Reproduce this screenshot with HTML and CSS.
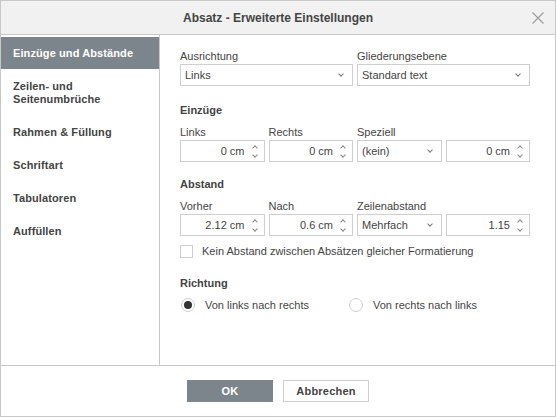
FILE: index.html
```html
<!DOCTYPE html>
<html lang="de">

<head>
    <meta charset="UTF-8">
    <meta name="viewport" content="width=device-width, initial-scale=1.0">
    <title>Absatz - Erweiterte Einstellungen</title>
    <link rel="stylesheet" href="styles.css">
</head>

<body>
    <div class="dialog">
        <header class="dialog_head">
            <h1>Absatz - Erweiterte Einstellungen</h1>
            <span class="close">
                <svg width="12" height="12" viewBox="0 0 12 12"><path d="M0.5 0.5 L11.5 11.5 M11.5 0.5 L0.5 11.5" stroke="#9a9a9a" stroke-width="1.1" fill="none"/></svg>
            </span>
        </header>

        <div class="dialog_body">
            <nav class="side">
                <div class="side_item active">Einzüge und Abstände</div>
                <div class="side_item">Zeilen- und<br>Seitenumbrüche</div>
                <div class="side_item">Rahmen &amp; Füllung</div>
                <div class="side_item">Schriftart</div>
                <div class="side_item">Tabulatoren</div>
                <div class="side_item">Auffüllen</div>
            </nav>

            <section class="panel">
                <!-- alignment / outline -->
                <div class="grid">
                    <div class="col2">
                        <label>Ausrichtung</label>
                        <div class="box select"><span>Links</span><i class="caret"></i></div>
                    </div>
                    <div class="col2">
                        <label>Gliederungsebene</label>
                        <div class="box select"><span>Standard text</span><i class="caret"></i></div>
                    </div>
                </div>

                <!-- indents -->
                <h2>Einzüge</h2>
                <div class="grid">
                    <div>
                        <label>Links</label>
                        <div class="box spin"><span>0 cm</span><i class="arrows"></i></div>
                    </div>
                    <div>
                        <label>Rechts</label>
                        <div class="box spin"><span>0 cm</span><i class="arrows"></i></div>
                    </div>
                    <div>
                        <label>Speziell</label>
                        <div class="box select"><span>(kein)</span><i class="caret"></i></div>
                    </div>
                    <div>
                        <label>&nbsp;</label>
                        <div class="box spin"><span>0 cm</span><i class="arrows"></i></div>
                    </div>
                </div>

                <!-- spacing -->
                <h2 class="second">Abstand</h2>
                <div class="grid">
                    <div>
                        <label>Vorher</label>
                        <div class="box spin"><span>2.12 cm</span><i class="arrows"></i></div>
                    </div>
                    <div>
                        <label>Nach</label>
                        <div class="box spin"><span>0.6 cm</span><i class="arrows"></i></div>
                    </div>
                    <div>
                        <label>Zeilenabstand</label>
                        <div class="box select"><span>Mehrfach</span><i class="caret"></i></div>
                    </div>
                    <div>
                        <label>&nbsp;</label>
                        <div class="box spin"><span>1.15</span><i class="arrows"></i></div>
                    </div>
                </div>

                <div class="check">
                    <span class="check_box"></span>
                    <span>Kein Abstand zwischen Absätzen gleicher Formatierung</span>
                </div>

                <!-- direction -->
                <h2 class="third">Richtung</h2>
                <div class="radios">
                    <div class="radio">
                        <span class="radio_dot checked"></span>
                        <span>Von links nach rechts</span>
                    </div>
                    <div class="radio">
                        <span class="radio_dot"></span>
                        <span>Von rechts nach links</span>
                    </div>
                </div>
            </section>
        </div>

        <footer class="dialog_foot">
            <button class="btn primary">OK</button>
            <button class="btn">Abbrechen</button>
        </footer>
    </div>
</body>

</html>
```

FILE: styles.css
```css
* {
    margin: 0;
    padding: 0;
    box-sizing: border-box;
}

body {
    font-family: "Liberation Sans", Arial, sans-serif;
    font-size: 11px;
    line-height: 1;
    color: #444;
    background: #fff;
}

.dialog {
    width: 556px;
    height: 417px;
    border: 1px solid #c8c8c8;
    display: flex;
    flex-direction: column;
}

.dialog_head {
    position: relative;
    height: 34px;
    flex: none;
    background: #f1f1f1;
    border-bottom: 1px solid #c8c8c8;
    display: flex;
    align-items: center;
    justify-content: center;
}

.dialog_head h1 {
    font-size: 12px;
    font-weight: bold;
    color: #444;
    margin-top: 1px;
}

.close {
    position: absolute;
    right: 11px;
    top: 11px;
    width: 12px;
    height: 12px;
    display: block;
}

.close svg {
    display: block;
}

.dialog_body {
    display: flex;
    height: 331px;
    flex: none;
    border-bottom: 1px solid #c8c8c8;
}

/* left menu */
.side {
    width: 159px;
    flex: none;
    border-right: 1px solid #c8c8c8;
    padding-top: 2px;
}

.side_item {
    padding: 10px 12px;
    line-height: 13px;
    font-weight: bold;
    letter-spacing: 0.1px;
    color: #444;
}

.side_item.active {
    background: #7d858c;
    color: #fff;
    height: 32px;
    margin-bottom: 1px;
}

/* right panel */
.panel {
    flex: 1;
    padding: 14px 0 0 20px;
}

.grid {
    width: 350px;
    display: grid;
    grid-template-columns: repeat(4, 1fr);
    column-gap: 4px;
}

.col2 {
    grid-column: span 2;
}

label {
    display: block;
    line-height: 14px;
    margin-bottom: 1px;
    white-space: nowrap;
}

h2 {
    font-size: 11px;
    font-weight: bold;
    line-height: 14px;
    margin: 17px 0 8px;
}

h2.second {
    margin-top: 15px;
}

h2.third {
    margin-top: 18px;
}

.box {
    height: 22px;
    border: 1px solid #cfcfcf;
    background: #fff;
    display: flex;
    align-items: center;
    color: #444;
}

.select {
    padding: 0 9px 0 4px;
    justify-content: space-between;
}

.spin {
    padding: 0 6px 0 4px;
    justify-content: flex-end;
}

.spin span {
    margin-right: 7px;
}

.caret {
    width: 4px;
    height: 4px;
    border-right: 1px solid #777;
    border-bottom: 1px solid #777;
    transform: rotate(45deg);
    margin-top: -2px;
}

.arrows {
    position: relative;
    width: 6px;
    height: 16px;
}

.arrows::before,
.arrows::after {
    content: '';
    position: absolute;
    left: 1px;
    width: 3px;
    height: 3px;
    border-left: 1px solid #888;
    border-top: 1px solid #888;
}

.arrows::before {
    top: 3px;
    transform: rotate(45deg);
}

.arrows::after {
    top: 10px;
    transform: rotate(225deg);
}

.check {
    display: flex;
    align-items: center;
    margin-top: 9px;
    height: 13px;
}

.check_box {
    width: 13px;
    height: 13px;
    border: 1px solid #cfcfcf;
    margin-right: 9px;
}

.radios {
    display: flex;
    margin-top: 5px;
}

.radio {
    display: flex;
    align-items: center;
    width: 168px;
    padding-left: 1px;
}

.radio_dot {
    position: relative;
    width: 14px;
    height: 14px;
    border: 1px solid #cfcfcf;
    border-radius: 50%;
    margin-right: 10px;
}

.radio_dot.checked::after {
    content: '';
    position: absolute;
    left: 2px;
    top: 2px;
    width: 8px;
    height: 8px;
    border-radius: 50%;
    background: #333;
}

/* footer */
.dialog_foot {
    flex: 1;
    display: flex;
    justify-content: center;
    align-items: center;
    gap: 10px;
}

.btn {
    width: 86px;
    height: 22px;
    font-family: "Liberation Sans", Arial, sans-serif;
    font-size: 11px;
    font-weight: bold;
    color: #444;
    background: #fff;
    border: 1px solid #cfcfcf;
    letter-spacing: 0.2px;
}

.btn.primary {
    background: #7d858c;
    border-color: #7d858c;
    color: #fff;
}
```
